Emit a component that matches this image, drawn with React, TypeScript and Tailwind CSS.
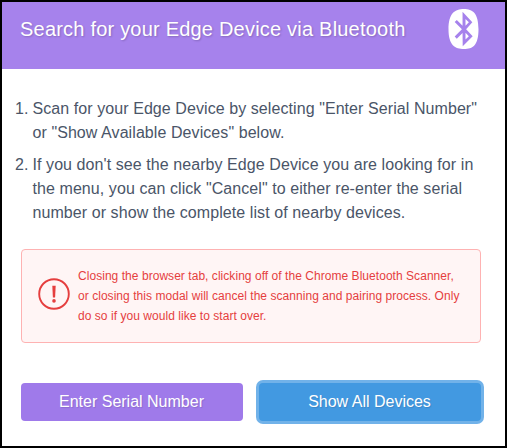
import { FaBluetooth } from "react-icons/fa";

const steps = [
  ['Scan for your Edge Device by selecting "Enter Serial Number"', 'or "Show Available Devices" below.'],
  [
    "If you don't see the nearby Edge Device you are looking for in",
    'the menu, you can click "Cancel" to either re-enter the serial',
    "number or show the complete list of nearby devices.",
  ],
];

const warning = [
  "Closing the browser tab, clicking off of the Chrome Bluetooth Scanner,",
  "or closing this modal will cancel the scanning and pairing process. Only",
  "do so if you would like to start over.",
];

function AlertIcon() {
  return (
    <svg className="h-8 w-8 shrink-0" viewBox="0 0 32 32" fill="none">
      <circle cx="16" cy="16" r="14.8" stroke="#e53e3e" strokeWidth="1.9" />
      <path d="M14.3 7.8h3.4l-.6 11.6h-2.2z" fill="#e53e3e" />
      <circle cx="16" cy="22.9" r="1.8" fill="#e53e3e" />
    </svg>
  );
}

export default function App() {
  return (
    <div className="flex h-[448px] w-[507px] flex-col border-2 border-black bg-white font-['Liberation_Sans',Arial,sans-serif]">
      <header className="flex h-[67px] shrink-0 justify-between bg-[#a682ec] pr-[24px] pl-[18px]">
        <h1 className="pt-3 text-[20px] leading-[30px] tracking-[0.21px] whitespace-nowrap text-white [text-shadow:1px_1px_2px_rgba(0,0,0,0.2)]">
          Search for your Edge Device via Bluetooth
        </h1>
        <FaBluetooth className="mt-[7px] h-10 w-[35px] text-white" />
      </header>
      <ol className="mt-[28px] flex flex-col gap-2 pl-[13px] text-[16px] leading-6 tracking-[0.075px] text-[#4a5568]">
        {steps.map((lines, i) => (
          <li key={i} className="flex">
            <span className="w-[17.5px] shrink-0">{i + 1}.</span>
            <div>
              {lines.map((line) => (
                <p key={line} className="whitespace-nowrap">{line}</p>
              ))}
            </div>
          </li>
        ))}
      </ol>
      <section className="mt-6 ml-[19px] flex h-[94px] w-[460px] items-center gap-2 rounded border border-[#feb2b2] bg-[#fff5f5] pb-1 pl-4 text-[12px] leading-5 tracking-[0.045px] text-[#e53e3e]">
        <AlertIcon />
        <div className="pt-1">
          {warning.map((line) => (
            <p key={line} className="whitespace-nowrap">{line}</p>
          ))}
        </div>
      </section>
      <div className="mt-10 ml-[19px] flex gap-4 text-[16px] text-white">
        <button className="h-[38px] w-[222px] rounded bg-[#9f7aea] pr-px [text-shadow:1px_1px_1px_rgba(0,0,0,0.12)]">
          Enter Serial Number
        </button>
        <button className="h-[38px] w-[222px] rounded bg-[#4299e1] pr-px shadow-[0_0_0_3px_#71b2e9] [text-shadow:1px_1px_1px_rgba(0,0,0,0.12)]">
          Show All Devices
        </button>
      </div>
    </div>
  );
}
